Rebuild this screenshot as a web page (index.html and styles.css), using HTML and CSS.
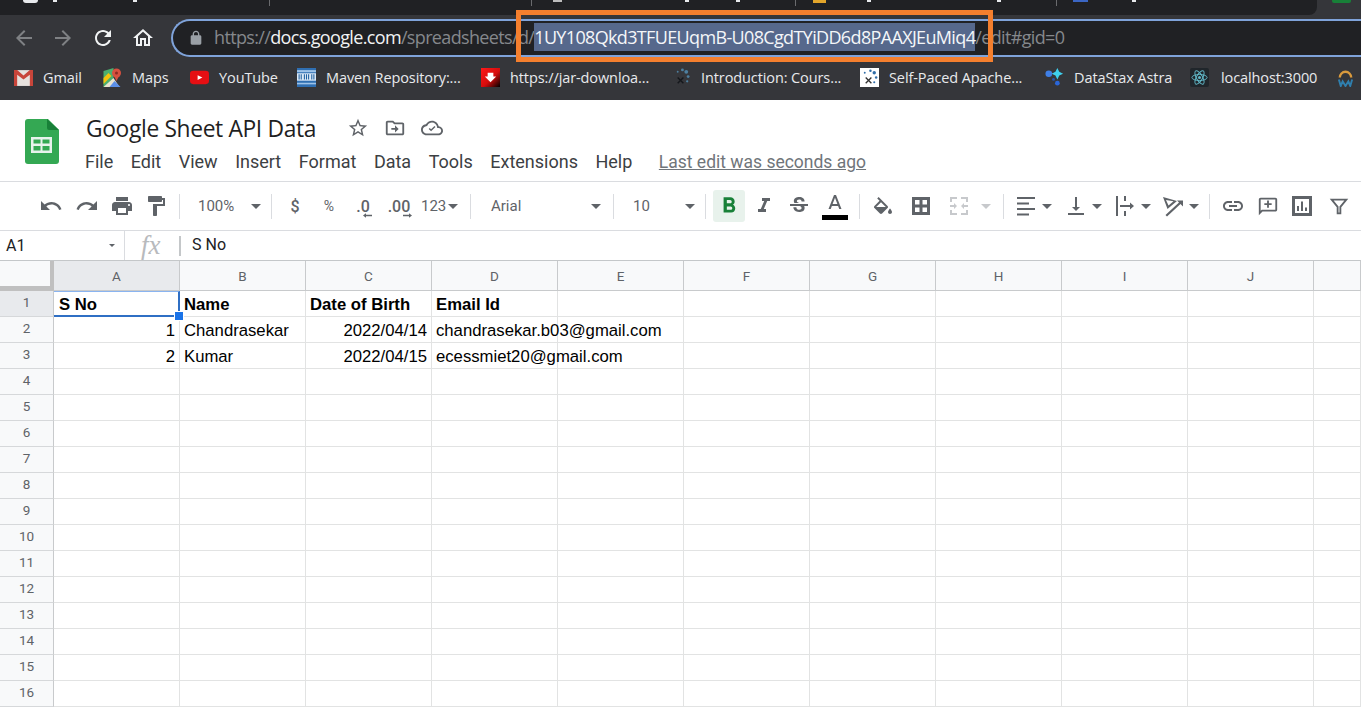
FILE: index.html
```html
<!DOCTYPE html>
<html lang="en">
<head>
<meta charset="utf-8">
<title>Google Sheet API Data</title>
<link rel="stylesheet" href="styles.css">
</head>
<body>
<div class="page">
  <div class="chrome-top">
    <div class="tabstrip">
      <div class="tab"><i class="blip blip-round"></i><i class="blip blip-a"></i><i class="blip blip-b"></i></div>
      <div class="tab"></div>
      <div class="tab"><i class="blip blip-c"></i><i class="blip blip-d"></i><i class="blip blip-k"></i></div>
      <div class="tab"><i class="blip blip-e"></i><i class="blip blip-f"></i><i class="blip blip-g"></i></div>
      <div class="tab tab-last"><i class="blip blip-h"></i><i class="blip blip-i"></i></div>
    </div>
    <div class="ext-green"></div>
  </div>
  <div class="navbar">
    <svg class="nav-ic dim" viewBox="0 0 24 24"><path d="M20 11H7.83l5.59-5.59L12 4l-8 8 8 8 1.41-1.41L7.83 13H20v-2z"/></svg>
    <svg class="nav-ic dim" viewBox="0 0 24 24"><path d="M12 4l-1.41 1.41L16.17 11H4v2h12.17l-5.58 5.59L12 20l8-8z"/></svg>
    <svg class="nav-ic" viewBox="0 0 24 24"><path d="M17.65 6.35C16.2 4.9 14.21 4 12 4c-4.42 0-7.99 3.58-7.99 8s3.57 8 7.99 8c3.73 0 6.84-2.55 7.73-6h-2.08c-.82 2.33-3.04 4-5.65 4-3.31 0-6-2.69-6-6s2.69-6 6-6c1.66 0 3.14.69 4.22 1.78L13 11h7V4l-2.35 2.35z"/></svg>
    <svg class="nav-ic" viewBox="0 0 24 24"><path d="M12 5.69l5 4.5V18h-2v-6H9v6H7v-7.81l5-4.5M12 3L2 12h3v8h6v-6h2v6h6v-8h3L12 3z"/></svg>
    <div class="omnibox">
      <svg class="lock" viewBox="0 0 24 24"><path d="M18 8h-1V6c0-2.76-2.24-5-5-5S7 3.24 7 6v2H6c-1.1 0-2 .9-2 2v10c0 1.1.9 2 2 2h12c1.1 0 2-.9 2-2V10c0-1.1-.9-2-2-2zM9 6c0-1.66 1.34-3 3-3s3 1.34 3 3v2H9V6z"/></svg>
      <span class="url">https://<b class="host">docs.google.com</b>/spreadsheets/d/<span class="sel">1UY108Qkd3TFUEUqmB-U08CgdTYiDD6d8PAAXJEuMiq4</span>/edit#gid=0</span>
    </div>
  </div>
  <div class="bookmarks">
    <div class="bm"><svg class="bm-ic" viewBox="0 0 18 16"><rect width="18" height="15" y="1" fill="#e6e1dd"/><path d="M0 1h3l6 5 6-5h3v15h-3V5.500L9 10 3 5.500V16H0z" fill="#c8453a"/></svg>Gmail</div>
    <div class="bm"><svg class="bm-ic" viewBox="0 0 18 19"><path d="M0 3l10-3v19H0z" fill="#4caf6e"/><path d="M0 19l10-9 6 9z" fill="#e9e3cf"/><path d="M0 10l5-5 3 3-8 8z" fill="#f4c20d"/><path d="M6 19l5-6 6 6z" fill="#5b8fe8"/><circle cx="13" cy="5" r="4.500" fill="#d8503f"/><path d="M10 7l3 6 3-6z" fill="#d8503f"/><circle cx="13" cy="5" r="1.500" fill="#8c2b22"/></svg>Maps</div>
    <div class="bm"><svg class="bm-ic" viewBox="0 0 20 14"><rect width="20" height="14" rx="3.500" fill="#e60f13"/><path d="M8 4.500l5 2.500-5 2.500z" fill="#fff"/></svg>YouTube</div>
    <div class="bm"><svg class="bm-ic" viewBox="0 0 18 18"><rect width="18" height="18" fill="#2f6fb2"/><rect y="2" width="18" height="2" fill="#9ec3e8"/><rect y="5" width="18" height="7" fill="#dbe9f6"/><path d="M2 6v5M4 6v5M7 6v5M9 6v5M11 6v5M14 6v5M16 6v5" stroke="#1f5f9f" stroke-width="1"/><rect y="14" width="18" height="1.500" fill="#9ec3e8"/></svg>Maven Repository:...</div>
    <div class="bm"><svg class="bm-ic" viewBox="0 0 20 20"><defs><linearGradient id="jarbg" x1="0" y1="0" x2="1" y2="1"><stop offset="0" stop-color="#ff1a1a"/><stop offset=".55" stop-color="#d50c0c"/><stop offset="1" stop-color="#000"/></linearGradient></defs><rect width="20" height="20" fill="url(#jarbg)"/><path d="M7 5h6v4h3l-6 6-6-6h3z" fill="#fff"/></svg>https://jar-downloa...</div>
    <div class="bm"><svg class="bm-ic" viewBox="0 0 20 20"><g fill="#4d7f9f"><circle cx="11" cy="2" r="1.500"/><circle cx="15" cy="4" r="2"/><circle cx="17" cy="9" r="1.500"/><circle cx="16" cy="14" r="1.200"/><circle cx="6" cy="4" r="1"/></g><path d="M6 10l6 6M12 10l-6 6" stroke="#15181c" stroke-width="1.500"/></svg>Introduction: Cours...</div>
    <div class="bm"><svg class="bm-ic" viewBox="0 0 20 20"><rect width="20" height="20" fill="#fff"/><g fill="#2f6da8"><circle cx="11" cy="3" r="1.300"/><circle cx="15" cy="5" r="1.800"/><circle cx="17" cy="10" r="1.300"/><circle cx="15" cy="15" r="1.100"/><circle cx="5" cy="5" r="1"/></g><path d="M6 10l6 6M12 10l-6 6" stroke="#333" stroke-width="1.400"/></svg>Self-Paced Apache...</div>
    <div class="bm"><svg class="bm-ic" viewBox="0 0 20 20"><circle cx="4" cy="6" r="3.500" fill="#3f7fe6"/><path d="M13 0l2 4 4 2-4 2-2 4-2-4-4-2 4-2z" fill="#3fd0ee"/><circle cx="9" cy="12" r="1.500" fill="#2556b0"/><circle cx="13" cy="16" r="2.500" fill="#2a66d8"/></svg>DataStax Astra</div>
    <div class="bm"><svg class="bm-ic bm-ic-react" viewBox="0 0 20 20"><rect width="20" height="20" rx="2" fill="#20262b"/><g fill="none" stroke="#61b8c8" stroke-width="1"><ellipse cx="10" cy="10" rx="8" ry="3.200"/><ellipse cx="10" cy="10" rx="8" ry="3.200" transform="rotate(60 10 10)"/><ellipse cx="10" cy="10" rx="8" ry="3.200" transform="rotate(120 10 10)"/></g><circle cx="10" cy="10" r="1.600" fill="#61b8c8"/></svg>localhost:3000</div>
    <div class="bm"><svg class="bm-ic" viewBox="0 0 18 20"><path d="M3 10a6 6 0 0 1 12 0" fill="none" stroke="#d99a3d" stroke-width="2.500"/><path d="M2 12l2 7 2-5 3 5 3-5 2 5 2-7" fill="none" stroke="#2f7fae" stroke-width="2"/></svg></div>
  </div>

  <header class="docbar">
    <svg class="logo" viewBox="0 0 34 45"><path d="M3 0h20l11 11v31a3 3 0 0 1-3 3H3a3 3 0 0 1-3-3V3a3 3 0 0 1 3-3z" fill="#34a853"/><path d="M22 0l12 11H24a2 2 0 0 1-2-2z" fill="#188038"/><path d="M6 18h21v16H6z" fill="#e8f3ec"/><path d="M8.500 20.500h7v4h-7zM17.500 20.500h7v4h-7zM8.500 27h7v4.500h-7zM17.500 27h7v4.500h-7z" fill="#34a853"/></svg>
    <div class="docinfo">
      <div class="titlerow">
        <span class="doctitle">Google Sheet API Data</span>
        <svg class="title-ic ic-star" viewBox="0 0 24 24"><path d="M22 9.240l-7.190-.62L12 2 9.190 8.630 2 9.240l5.460 4.730L5.820 21 12 17.270 18.180 21l-1.630-7.030L22 9.240zM12 15.400l-3.760 2.270 1-4.280-3.320-2.880 4.380-.38L12 6.100l1.710 4.040 4.380.38-3.320 2.880 1 4.280L12 15.400z"/></svg>
        <svg class="title-ic" viewBox="0 0 24 24"><path d="M20 6h-8l-2-2H4c-1.100 0-2 .9-2 2v12c0 1.100.9 2 2 2h16c1.100 0 2-.9 2-2V8c0-1.100-.9-2-2-2zm0 12H4V6h5.170l2 2H20v10zm-8-1v-3H8v-2h4V9l4 4z"/></svg>
        <svg class="title-ic" viewBox="0 0 24 24"><path d="M19.350 10.040C18.670 6.590 15.640 4 12 4 9.110 4 6.600 5.640 5.350 8.040 2.340 8.360 0 10.910 0 14c0 3.310 2.690 6 6 6h13c2.760 0 5-2.240 5-5 0-2.640-2.050-4.780-4.650-4.960zM19 18H6c-2.210 0-4-1.790-4-4 0-2.050 1.530-3.760 3.560-3.970l1.070-.11.5-.95C8.080 7.140 9.940 6 12 6c2.620 0 4.880 1.860 5.390 4.430l.3 1.500 1.530.11c1.560.1 2.780 1.410 2.780 2.960 0 1.650-1.350 3-3 3zm-8-2.400l-2.600-2.600 1.100-1.100 1.500 1.500 3.700-3.700 1.100 1.100z"/></svg>
      </div>
      <nav class="menus">
        <span>File</span><span>Edit</span><span>View</span><span>Insert</span><span>Format</span><span>Data</span><span>Tools</span><span>Extensions</span><span>Help</span><span class="lastedit">Last edit was seconds ago</span>
      </nav>
    </div>
  </header>

  <div class="toolbar">
    <div class="ti"><svg class="ic" viewBox="0 0 24 24"><path d="M12.500 8c-2.650 0-5.050.99-6.900 2.600L2 7v9h9l-3.620-3.620c1.390-1.160 3.160-1.880 5.120-1.880 3.540 0 6.550 2.310 7.600 5.500l2.370-.78C21.080 11.030 17.150 8 12.500 8z"/></svg></div>
    <div class="ti"><svg class="ic" viewBox="0 0 24 24"><path d="M18.400 10.600C16.550 8.990 14.150 8 11.500 8c-4.650 0-8.580 3.030-9.960 7.220L3.900 16c1.050-3.190 4.050-5.500 7.600-5.500 1.950 0 3.730.72 5.120 1.880L13 16h9V7l-3.600 3.600z"/></svg></div>
    <div class="ti"><svg class="ic" viewBox="0 0 24 24"><path d="M19 8H5c-1.660 0-3 1.340-3 3v6h4v4h12v-4h4v-6c0-1.660-1.340-3-3-3zm-3 11H8v-5h8v5zm3-7c-.55 0-1-.45-1-1s.45-1 1-1 1 .45 1 1-.45 1-1 1zm-1-9H6v4h12V3z"/></svg></div>
    <div class="ti"><svg class="ic" viewBox="0 0 24 24"><path d="M18 4V3c0-.55-.45-1-1-1H5c-.55 0-1 .45-1 1v4c0 .55.45 1 1 1h12c.55 0 1-.45 1-1V6h1v4H9v11c0 .55.45 1 1 1h2c.55 0 1-.45 1-1v-9h8V4h-3z"/></svg></div>
    <div class="ti"><i class="sep"></i></div>
    <div class="ti sel-box pad-zoom"><span>100%</span><i class="caret"></i></div>
    <div class="ti"><i class="sep"></i></div>
    <div class="ti txt">$</div>
    <div class="ti txt txt-sm">%</div>
    <div class="ti txt dec"><span>.0</span><svg class="dec-arrow" viewBox="0 0 12 6"><path d="M0 3l4-3v2h8v2H4v2z"/></svg></div>
    <div class="ti txt dec"><span>.00</span><svg class="dec-arrow dec-right" viewBox="0 0 12 6"><path d="M12 3L8 0v2H0v2h8v2z"/></svg></div>
    <div class="ti sel-box pad-num"><span>123</span><i class="caret"></i></div>
    <div class="ti"><i class="sep"></i></div>
    <div class="ti sel-box pad-font"><span>Arial</span><i class="caret"></i></div>
    <div class="ti"><i class="sep"></i></div>
    <div class="ti sel-box pad-size"><span>10</span><i class="caret"></i></div>
    <div class="ti"><i class="sep"></i></div>
    <div class="ti"><div class="bold-btn"><svg class="ic ic-bold" viewBox="0 0 24 24"><path d="M15.600 10.790c.97-.67 1.650-1.770 1.650-2.790 0-2.260-1.750-4-4-4H7v14h7.040c2.090 0 3.710-1.700 3.710-3.790 0-1.520-.86-2.820-2.150-3.420zM10 6.500h3c.83 0 1.500.67 1.500 1.500s-.67 1.500-1.500 1.500h-3v-3zm3.500 9H10v-3h3.500c.83 0 1.500.67 1.500 1.500s-.67 1.500-1.500 1.500z"/></svg></div></div>
    <div class="ti"><svg class="ic" viewBox="0 0 24 24"><path d="M10 4v3h2.210l-3.420 8H6v3h8v-3h-2.210l3.420-8H18V4z"/></svg></div>
    <div class="ti"><svg class="ic" viewBox="0 0 24 24"><path d="M6.850 7.080C6.850 4.370 9.450 3 12.240 3c1.640 0 3 .49 3.900 1.280.77.65 1.460 1.730 1.460 3.240h-3.010c0-.31-.05-.59-.15-.85-.29-.86-1.200-1.280-2.250-1.280-1.860 0-2.340 1.020-2.340 1.700 0 .48.25.88.74 1.210.38.25.77.48 1.410.7H7.390c-.21-.34-.54-.89-.54-1.920zM21 12v-2H3v2h9.620c1.150.45 1.960.75 1.960 1.970 0 1-.81 1.670-2.280 1.670-1.540 0-2.930-.54-2.930-2.510H6.400c0 .55.08 1.130.24 1.580.81 2.290 3.290 3.300 5.670 3.300 2.270 0 5.300-.89 5.300-4.050 0-.3-.01-1.160-.48-1.940H21V12z"/></svg></div>
    <div class="ti color-a"><svg class="ic ic-a" viewBox="0 0 24 18"><path d="M11 0L5.500 14h2.250l1.120-3h6.250l1.120 3h2.250L13 0h-2zM9.620 9L12 2.670 14.380 9H9.620z"/></svg><i class="color-bar"></i></div>
    <div class="ti"><i class="sep"></i></div>
    <div class="ti"><svg class="ic" viewBox="0 0 24 24"><path d="M16.560 8.940L7.620 0 6.210 1.410l2.380 2.380-5.150 5.150c-.59.59-.59 1.540 0 2.120l5.500 5.500c.29.29.68.44 1.060.44s.77-.15 1.060-.44l5.500-5.500c.59-.58.59-1.530 0-2.120zM5.210 10L10 5.210 14.790 10H5.210zM19 11.500s-2 2.170-2 3.500c0 1.100.9 2 2 2s2-.9 2-2c0-1.330-2-3.500-2-3.500z" transform="translate(0 3)"/><path d="M4.500 13h11l-5.500 5.500z"/></svg></div>
    <div class="ti"><svg class="ic" viewBox="0 0 24 24"><path d="M3 3h18v18H3zm3 3v4.500h4.500V6zm7.500 0v4.500H18V6zM6 13.500V18h4.500v-4.500zm7.500 0V18H18v-4.500z" fill-rule="evenodd"/></svg></div>
    <div class="ti"><svg class="ic ic-off" viewBox="0 0 24 24"><path d="M3 3h7v2H5v3H3zM14 3h7v5h-2V5h-5zM3 16h2v3h5v2H3zM19 16h2v5h-7v-2h5zM3 11h4V9l3 3-3 3v-2H3zM21 11h-4V9l-3 3 3 3v-2h4z"/></svg></div>
    <div class="ti"><i class="caret caret-off"></i></div>
    <div class="ti"><i class="sep"></i></div>
    <div class="ti group"><svg class="ic" viewBox="0 0 24 24"><path d="M3 3h18v2H3zM3 8.500h12v2H3zM3 14h18v2H3zM3 19.500h12v2H3z"/></svg><i class="caret"></i></div>
    <div class="ti group"><svg class="ic" viewBox="0 0 24 24"><path d="M16 13h-3V3h-2v10H8l4 4 4-4zM4 19v2h16v-2H4z"/></svg><i class="caret"></i></div>
    <div class="ti group"><svg class="ic" viewBox="0 0 24 24"><path d="M3 2h2v20H3zM11 2h2v5h-2zM11 17h2v5h-2zM7 11h10V8.500l4 3.500-4 3.500V13H7z"/></svg><i class="caret"></i></div>
    <div class="ti group"><svg class="ic" viewBox="0 0 24 24"><path d="M2 3l14 4-9.500 8zm3 3l2.500 5.500 5-4.200zM4.500 21L18 8.500 16 6.500h6v6l-2.500-2.500L6 22.500z"/></svg><i class="caret"></i></div>
    <div class="ti"><i class="sep"></i></div>
    <div class="ti"><svg class="ic" viewBox="0 0 24 24"><path d="M3.900 12c0-1.710 1.390-3.100 3.100-3.100h4V7H7c-2.760 0-5 2.240-5 5s2.240 5 5 5h4v-1.900H7c-1.710 0-3.100-1.390-3.100-3.100zM8 13h8v-2H8v2zm9-6h-4v1.900h4c1.710 0 3.100 1.390 3.100 3.100s-1.390 3.100-3.100 3.100h-4V17h4c2.760 0 5-2.240 5-5s-2.240-5-5-5z"/></svg></div>
    <div class="ti"><svg class="ic ic-comment" viewBox="0 0 24 24"><path d="M20 3H4c-1.100 0-2 .9-2 2v17l4-4h14c1.100 0 2-.9 2-2V5c0-1.100-.9-2-2-2zm0 13H5.200L4 17.200V5h16v11zm-9-2h2v-3h3V9h-3V6h-2v3H8v2h3z"/></svg></div>
    <div class="ti"><svg class="ic" viewBox="0 0 24 24"><path d="M2 2h20v20H2zm3 3v14h14V5zM7 12h2v5H7zM11 7.500h2V17h-2zM15 13.500h2V17h-2z" fill-rule="evenodd"/></svg></div>
    <div class="ti"><svg class="ic ic-filter" viewBox="0 0 24 24"><path d="M4 5h16l-6.500 8v7h-3v-7z"/></svg></div>
  </div>

  <div class="formulabar">
    <div class="namebox"><span>A1</span><i class="caret caret-tiny"></i></div>
    <div class="fx">fx</div>
    <div class="fsep"></div>
    <div class="fval">S No</div>
  </div>

  <div class="sheet">
    <div class="corner"></div>
    <div class="ch ch-on">A</div><div class="ch">B</div><div class="ch">C</div><div class="ch">D</div><div class="ch">E</div><div class="ch">F</div><div class="ch">G</div><div class="ch">H</div><div class="ch">I</div><div class="ch">J</div><div class="ch"></div>

    <div class="rh rh-on">1</div><div class="cell hd active">S No<i class="handle"></i></div><div class="cell hd">Name</div><div class="cell hd">Date of Birth</div><div class="cell hd">Email Id</div><div class="cell"></div><div class="cell"></div><div class="cell"></div><div class="cell"></div><div class="cell"></div><div class="cell"></div><div class="cell"></div>
    <div class="rh">2</div><div class="cell num">1</div><div class="cell">Chandrasekar</div><div class="cell num">2022/04/14</div><div class="cell">chandrasekar.b03@gmail.com</div><div class="cell"></div><div class="cell"></div><div class="cell"></div><div class="cell"></div><div class="cell"></div><div class="cell"></div><div class="cell"></div>
    <div class="rh">3</div><div class="cell num">2</div><div class="cell">Kumar</div><div class="cell num">2022/04/15</div><div class="cell">ecessmiet20@gmail.com</div><div class="cell"></div><div class="cell"></div><div class="cell"></div><div class="cell"></div><div class="cell"></div><div class="cell"></div><div class="cell"></div>
    <div class="rh">4</div><div class="cell"></div><div class="cell"></div><div class="cell"></div><div class="cell"></div><div class="cell"></div><div class="cell"></div><div class="cell"></div><div class="cell"></div><div class="cell"></div><div class="cell"></div><div class="cell"></div>
    <div class="rh">5</div><div class="cell"></div><div class="cell"></div><div class="cell"></div><div class="cell"></div><div class="cell"></div><div class="cell"></div><div class="cell"></div><div class="cell"></div><div class="cell"></div><div class="cell"></div><div class="cell"></div>
    <div class="rh">6</div><div class="cell"></div><div class="cell"></div><div class="cell"></div><div class="cell"></div><div class="cell"></div><div class="cell"></div><div class="cell"></div><div class="cell"></div><div class="cell"></div><div class="cell"></div><div class="cell"></div>
    <div class="rh">7</div><div class="cell"></div><div class="cell"></div><div class="cell"></div><div class="cell"></div><div class="cell"></div><div class="cell"></div><div class="cell"></div><div class="cell"></div><div class="cell"></div><div class="cell"></div><div class="cell"></div>
    <div class="rh">8</div><div class="cell"></div><div class="cell"></div><div class="cell"></div><div class="cell"></div><div class="cell"></div><div class="cell"></div><div class="cell"></div><div class="cell"></div><div class="cell"></div><div class="cell"></div><div class="cell"></div>
    <div class="rh">9</div><div class="cell"></div><div class="cell"></div><div class="cell"></div><div class="cell"></div><div class="cell"></div><div class="cell"></div><div class="cell"></div><div class="cell"></div><div class="cell"></div><div class="cell"></div><div class="cell"></div>
    <div class="rh">10</div><div class="cell"></div><div class="cell"></div><div class="cell"></div><div class="cell"></div><div class="cell"></div><div class="cell"></div><div class="cell"></div><div class="cell"></div><div class="cell"></div><div class="cell"></div><div class="cell"></div>
    <div class="rh">11</div><div class="cell"></div><div class="cell"></div><div class="cell"></div><div class="cell"></div><div class="cell"></div><div class="cell"></div><div class="cell"></div><div class="cell"></div><div class="cell"></div><div class="cell"></div><div class="cell"></div>
    <div class="rh">12</div><div class="cell"></div><div class="cell"></div><div class="cell"></div><div class="cell"></div><div class="cell"></div><div class="cell"></div><div class="cell"></div><div class="cell"></div><div class="cell"></div><div class="cell"></div><div class="cell"></div>
    <div class="rh">13</div><div class="cell"></div><div class="cell"></div><div class="cell"></div><div class="cell"></div><div class="cell"></div><div class="cell"></div><div class="cell"></div><div class="cell"></div><div class="cell"></div><div class="cell"></div><div class="cell"></div>
    <div class="rh">14</div><div class="cell"></div><div class="cell"></div><div class="cell"></div><div class="cell"></div><div class="cell"></div><div class="cell"></div><div class="cell"></div><div class="cell"></div><div class="cell"></div><div class="cell"></div><div class="cell"></div>
    <div class="rh">15</div><div class="cell"></div><div class="cell"></div><div class="cell"></div><div class="cell"></div><div class="cell"></div><div class="cell"></div><div class="cell"></div><div class="cell"></div><div class="cell"></div><div class="cell"></div><div class="cell"></div>
    <div class="rh">16</div><div class="cell"></div><div class="cell"></div><div class="cell"></div><div class="cell"></div><div class="cell"></div><div class="cell"></div><div class="cell"></div><div class="cell"></div><div class="cell"></div><div class="cell"></div><div class="cell"></div>
  </div>

  <div class="annotation"></div>
</div>
</body>
</html>
```
FILE: styles.css
```css
* { box-sizing: border-box; }
html, body { margin: 0; padding: 0; background: #fff; }
.page {
  position: relative;
  width: 1361px;
  height: 707px;
  overflow: hidden;
  font-family: Roboto, "Liberation Sans", sans-serif;
}

/* browser chrome */
.chrome-top {
  display: flex;
  height: 15px;
  background: #35363a;
}
.tabstrip {
  display: grid;
  grid-template-columns: 270px 262px 264px 261px 1fr;
  width: 1317px;
  background: #202124;
  border-bottom-right-radius: 8px;
}
.tab {
  position: relative;
  height: 6px;
  border-right: 1px solid #6a6b6e;
}
.tab-last { border-right: 0; }
.blip { position: absolute; top: 0; height: 2px; background: #e8eaed; }
.blip-round { left: 23px; width: 15px; height: 3px; border-radius: 0 0 7px 7px; }
.blip-a { left: 53px; width: 4px; }
.blip-b { left: 133px; width: 4px; }
.blip-c { left: 21px; width: 9px; background: #bdbdbd; }
.blip-d { left: 153px; width: 4px; }
.blip-k { left: 204px; width: 4px; }
.blip-e { left: 17px; width: 13px; height: 3px; background: #e2a52b; }
.blip-f { left: 71px; width: 4px; }
.blip-g { left: 201px; width: 4px; }
.blip-h { left: 16px; width: 15px; background: #3b66c4; }
.blip-i { left: 75px; width: 4px; }
.ext-green {
  width: 19px;
  height: 3px;
  margin-left: 15px;
  background: #188038;
  border-radius: 0 0 2px 2px;
}

.navbar {
  display: grid;
  grid-template-columns: 44px 34px 46px 34px 1fr;
  align-items: center;
  justify-items: center;
  height: 45px;
  padding-left: 2px;
  background: #35363a;
}
.nav-ic { width: 24px; height: 24px; fill: #f1f3f4; }
.nav-ic.dim { fill: #7f8184; }
.omnibox {
  display: flex;
  align-items: center;
  justify-self: stretch;
  width: 1200px;
  height: 38px;
  margin-left: 11px;
  padding-left: 15px;
  border: 2px solid #7fa3da;
  border-right: 0;
  border-radius: 19px 0 0 19px;
  background: #202124;
  white-space: nowrap;
}
.lock { width: 16px; height: 16px; fill: #9aa0a6; flex: none; }
.url {
  margin: -1px 0 0 10px;
  color: #85888c;
  font: 18px/28px "Open Sans", sans-serif;
  letter-spacing: -0.65px;
}
.host { color: #f1f3f4; font-weight: 400; }
.sel {
  display: inline-block;
  height: 28px;
  background: #56688c;
  color: #f4f6f9;
  vertical-align: top;
}

.bookmarks {
  display: grid;
  grid-template-columns: 89px 87px 107px 184px 191px 188px 185px 145px 146px 25px;
  align-items: center;
  height: 40px;
  padding: 0 0 6px 14px;
  background: #35363a;
  color: #e8eaed;
  font: 14.500px "Open Sans", sans-serif;
  letter-spacing: -0.1px;
  white-space: nowrap;
}
.bm { display: flex; align-items: center; gap: 10px; }
.bm-ic { width: 19px; height: 19px; flex: none; }
.bm-ic-react { margin-right: 2px; }

/* docs header */
.docbar {
  display: flex;
  height: 82px;
  border-bottom: 1px solid #dadce0;
  background: #fff;
}
.logo { width: 34px; height: 45px; margin: 19px 0 0 25px; flex: none; }
.docinfo { margin-left: 27px; }
.titlerow {
  display: flex;
  align-items: center;
  height: 30px;
  margin-top: 13px;
}
.doctitle { width: 261px; color: #1f1f1f; font: 22.800px "Open Sans", sans-serif; letter-spacing: -0.35px; }
.title-ic { width: 22px; height: 22px; margin-right: 15px; fill: #5f6368; }
.menus {
  display: flex;
  gap: 17.500px;
  margin: 5px 0 0 -1px;
  color: #3c4043;
  font-size: 18px;
  line-height: 28px;
  white-space: nowrap;
}
.lastedit { margin-left: 9px; color: #70757a; font-size: 17.500px; text-decoration: underline; }

/* toolbar */
.toolbar {
  display: grid;
  grid-template-columns: 36px 36px 33px 36px 11px 81px 11px 36px 32px 36px 36px 45px 17px 129px 11px 80px 13px 34px 35px 36px 36px 13px 34px 42px 34px 20px 14px 45px 55px 43px 53px 7px 40px 30px 38px 36px;
  height: 49px;
  padding-left: 33px;
  border-bottom: 1px solid #dadce0;
  background: #fff;
  color: #5f6368;
}
.ti {
  display: flex;
  align-items: center;
  justify-content: center;
  height: 48px;
  font-size: 15px;
  white-space: nowrap;
}
.ic { width: 24px; height: 24px; fill: #5f6368; flex: none; }
.ic-off { fill: #c7c9cc; }
.ic-comment { width: 22px; height: 22px; }
.ic-filter { width: 22px; height: 22px; fill: none; stroke: #5f6368; stroke-width: 2; }
.sep { width: 1px; height: 25px; background: #dadce0; }
.caret {
  display: block;
  width: 0;
  height: 0;
  border-left: 5px solid transparent;
  border-right: 5px solid transparent;
  border-top: 5px solid #5f6368;
  flex: none;
}
.caret-off { border-top-color: #c7c9cc; }
.caret-tiny { border-left-width: 3px; border-right-width: 3px; border-top-width: 3px; }
.sel-box { justify-content: space-between; }
.pad-zoom { padding: 0 5px 0 13px; }
.pad-num { padding: 0 4px; }
.pad-font { padding: 0 7px 0 12px; }
.pad-size { padding: 0 4px 0 14px; }
.group { gap: 4px; }
.txt { font-size: 16px; font-weight: 500; }
.txt-sm { font-size: 14px; font-weight: 400; }
.dec { position: relative; }
.dec-arrow {
  position: absolute;
  left: 50%;
  top: 31px;
  width: 9px;
  height: 5px;
  fill: #5f6368;
}
.dec-right { left: 60%; }
.bold-btn {
  display: flex;
  align-items: center;
  justify-content: center;
  width: 32px;
  height: 32px;
  border-radius: 3px;
  background: #e8f2ec;
}
.ic-bold { width: 26px; height: 26px; fill: #188038; }
.color-a { flex-direction: column; }
.ic-a { height: 18px; margin-top: 2px; }
.color-bar { width: 26px; height: 5px; margin-top: 2px; background: #000; }

/* formula bar */
.formulabar {
  display: flex;
  align-items: center;
  height: 30px;
  border-bottom: 1px solid #c4c7c9;
  background: #fff;
  color: #202124;
  font-size: 16px;
}
.namebox {
  display: flex;
  align-items: center;
  justify-content: space-between;
  width: 125px;
  height: 29px;
  padding: 0 9px 0 6px;
  border-right: 1px solid #dadce0;
}
.fx {
  width: 54px;
  padding-left: 16px;
  color: #b8babd;
  font: italic 27px/29px "Liberation Serif", serif;
}
.fsep { width: 2px; height: 20px; background: #c4c7c9; }
.fval { margin: -2px 0 0 11px; }

/* sheet grid */
.sheet {
  display: grid;
  grid-template-columns: 54px repeat(10, 126px) 47px;
  grid-template-rows: 30px repeat(16, 26px);
  background: #fff;
}
.corner {
  background: #f8f9fa;
  border-right: 4px solid #c0c0c0;
  border-bottom: 5px solid #c0c0c0;
}
.ch {
  display: flex;
  align-items: center;
  justify-content: center;
  border-right: 1px solid #c8cacc;
  border-bottom: 1px solid #c8cacc;
  background: #f8f9fa;
  color: #5f6368;
  font-size: 13.500px;
}
.ch-on { background: #e8eaed; }
.rh {
  display: flex;
  align-items: center;
  justify-content: center;
  padding-bottom: 3px;
  border-right: 1px solid #c8cacc;
  border-bottom: 1px solid #d6d8da;
  background: #f8f9fa;
  color: #5f6368;
  font-size: 13.500px;
}
.rh-on { background: #e8eaed; }
.cell {
  position: relative;
  padding: 1px 4px 0;
  border-right: 1px solid #e2e3e3;
  border-bottom: 1px solid #e2e3e3;
  color: #000;
  font: 16.700px/26px "Liberation Sans", Arial, sans-serif;
  white-space: nowrap;
}
.hd { font-weight: 700; }
.num { text-align: right; }
.active {
  z-index: 2;
  padding: 0 4px 0 5px;
  border-top: 1px solid #8ab4f0;
  border-right: 2px solid #2f6fc4;
  border-bottom: 2px solid #2f6fc4;
  line-height: 25px;
}
.handle {
  position: absolute;
  right: -6px;
  bottom: -6px;
  width: 10px;
  height: 10px;
  border: 1px solid #fff;
  background: #1a73e8;
}

/* annotation drawn over the address bar */
.annotation {
  position: absolute;
  left: 516px;
  top: 10px;
  width: 477px;
  height: 52px;
  border: 5px solid #f47f2e;
}
```
